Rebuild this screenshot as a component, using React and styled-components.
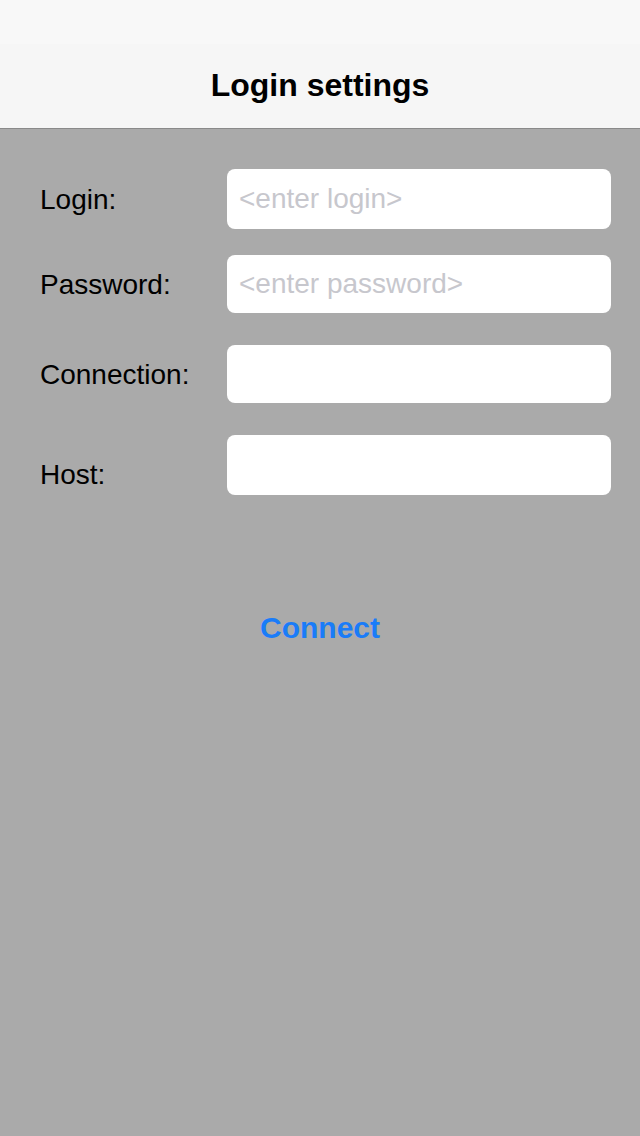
import React from 'react'
import styled, { createGlobalStyle } from 'styled-components'

const GlobalStyle = createGlobalStyle`
  html, body {
    margin: 0;
    padding: 0;
    background: #aaaaaa;
  }
  body {
    font-family: 'Liberation Sans', Arial, sans-serif;
  }
`

const Screen = styled.div`
  width: 640px;
  min-height: 1136px;
  background: #aaaaaa;
  display: flex;
  flex-direction: column;
`

const StatusBar = styled.div`
  height: 44px;
  background: #f8f8f8;
`

const NavBar = styled.div`
  height: 85px;
  background: #f6f6f6;
  border-bottom: 1px solid #8a8a8a;
  display: flex;
  align-items: center;
  justify-content: center;
  padding-bottom: 2px;
  box-sizing: border-box;
`

const Title = styled.h1`
  margin: 0;
  font-size: 32px;
  font-weight: bold;
  color: #000;
`

const Form = styled.div`
  display: flex;
  flex-direction: column;
  padding: 40px 29px 0 40px;
`

const Row = styled.div`
  display: flex;
  align-items: center;
  margin-top: ${p => p.gap || 0}px;
`

const Label = styled.label`
  width: 187px;
  flex-shrink: 0;
  font-size: 28px;
  color: #000;
  padding-top: ${p => p.shift || 0}px;
`

const Field = styled.input`
  flex: 1;
  min-width: 0;
  height: ${p => p.h || 58}px;
  box-sizing: border-box;
  border: none;
  border-radius: 8px;
  background: #fff;
  padding: 0 12px;
  font-family: 'Liberation Sans', Arial, sans-serif;
  font-size: 28px;
  color: #000;
  outline: none;
  &::placeholder {
    color: #c7c7cd;
  }
`

const Actions = styled.div`
  display: flex;
  justify-content: center;
  margin-top: 116px;
`

const ConnectButton = styled.button`
  background: none;
  border: none;
  padding: 0 6px;
  font-family: 'Liberation Sans', Arial, sans-serif;
  font-size: 30px;
  font-weight: bold;
  color: #1a7cf8;
  cursor: pointer;
`

export default function App () {
  return (
    <Screen>
      <GlobalStyle />
      <StatusBar />
      <NavBar>
        <Title>Login settings</Title>
      </NavBar>
      <Form>
        <Row>
          <Label shift={2}>Login:</Label>
          <Field h={60} placeholder='<enter login>' />
        </Row>
        <Row gap={26}>
          <Label shift={2}>Password:</Label>
          <Field placeholder='<enter password>' />
        </Row>
        <Row gap={32}>
          <Label shift={2}>Connection:</Label>
          <Field />
        </Row>
        <Row gap={32}>
          <Label shift={20}>Host:</Label>
          <Field h={60} />
        </Row>
      </Form>
      <Actions>
        <ConnectButton>Connect</ConnectButton>
      </Actions>
    </Screen>
  )
}
